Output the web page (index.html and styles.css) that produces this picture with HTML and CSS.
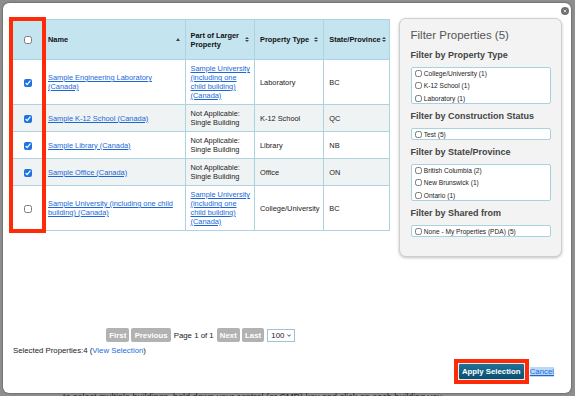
FILE: index.html
```html
<!DOCTYPE html>
<html lang="en">

<head>
    <meta charset="UTF-8">
    <meta name="viewport" content="width=device-width, initial-scale=1.0">
    <title>Select Properties</title>
    <link rel="stylesheet" href="styles.css">
</head>

<body>
    <div class="modal">
        <button class="closeBtn" title="Close">
            <svg width="8" height="8" viewBox="0 0 8 8">
                <circle cx="4" cy="4" r="4" fill="#6f6f6f" />
                <path d="M2.7 2.7 L5.3 5.3 M5.3 2.7 L2.7 5.3" stroke="#e6e6e6" stroke-width="0.9" />
            </svg>
        </button>
        <div class="modalMain">
            <div class="listColumn">
                <div class="tableBox">
                    <table class="propTable">
                        <colgroup>
                            <col style="width: 30px">
                            <col style="width: 142.5px">
                            <col style="width: 69.5px">
                            <col style="width: 69.3px">
                            <col style="width: 65.7px">
                        </colgroup>
                        <thead>
                            <tr>
                                <th class="checkCell"><input type="checkbox"></th>
                                <th>
                                    <div class="thInner"><span>Name</span>
                                        <svg class="sortIcon" width="4" height="3" viewBox="0 0 4 3"><polygon points="0,3 2,0 4,3" /></svg>
                                    </div>
                                </th>
                                <th>
                                    <div class="thInner"><span>Part of Larger Property</span>
                                        <svg class="sortIcon" width="4" height="5" viewBox="0 0 4 5"><polygon points="0,2 2,0 4,2" /><polygon points="0,3 2,5 4,3" /></svg>
                                    </div>
                                </th>
                                <th>
                                    <div class="thInner"><span class="nowrap">Property Type</span>
                                        <svg class="sortIcon" width="4" height="5" viewBox="0 0 4 5"><polygon points="0,2 2,0 4,2" /><polygon points="0,3 2,5 4,3" /></svg>
                                    </div>
                                </th>
                                <th class="lastCol">
                                    <div class="thInner"><span class="nowrap">State/Province</span>
                                        <svg class="sortIcon" width="4" height="5" viewBox="0 0 4 5"><polygon points="0,2 2,0 4,2" /><polygon points="0,3 2,5 4,3" /></svg>
                                    </div>
                                </th>
                            </tr>
                        </thead>
                        <tbody>
                            <tr>
                                <td class="checkCell"><input type="checkbox" checked></td>
                                <td><a href="#">Sample Engineering Laboratory (Canada)</a></td>
                                <td><a href="#">Sample University (including one child building) (Canada)</a></td>
                                <td>Laboratory</td>
                                <td>BC</td>
                            </tr>
                            <tr class="odd">
                                <td class="checkCell"><input type="checkbox" checked></td>
                                <td><a href="#">Sample K-12 School (Canada)</a></td>
                                <td>Not Applicable: Single Building</td>
                                <td>K-12 School</td>
                                <td>QC</td>
                            </tr>
                            <tr>
                                <td class="checkCell"><input type="checkbox" checked></td>
                                <td><a href="#">Sample Library (Canada)</a></td>
                                <td>Not Applicable: Single Building</td>
                                <td>Library</td>
                                <td>NB</td>
                            </tr>
                            <tr class="odd">
                                <td class="checkCell"><input type="checkbox" checked></td>
                                <td><a href="#">Sample Office (Canada)</a></td>
                                <td>Not Applicable: Single Building</td>
                                <td>Office</td>
                                <td>ON</td>
                            </tr>
                            <tr>
                                <td class="checkCell"><input type="checkbox"></td>
                                <td><a href="#">Sample University (including one child building) (Canada)</a></td>
                                <td><a href="#">Sample University (including one child building) (Canada)</a></td>
                                <td>College/University</td>
                                <td>BC</td>
                            </tr>
                        </tbody>
                    </table>
                    <div class="markBox"></div>
                </div>

                <div class="pager">
                    <button class="pageBtn">First</button>
                    <button class="pageBtn">Previous</button>
                    <span class="pageText">Page 1 of 1</span>
                    <button class="pageBtn">Next</button>
                    <button class="pageBtn">Last</button>
                    <div class="pageSize">
                        <span>100</span>
                        <svg width="4" height="3" viewBox="0 0 4 3"><path d="M0.3 0.5 L2 2.3 L3.7 0.5" fill="none" stroke="#222" stroke-width="0.8" /></svg>
                    </div>
                </div>
                <div class="selectedInfo">Selected Properties:4 (<a href="#">View Selection</a>)</div>
            </div>

            <div class="filterPanel">
                <div class="filterTitle">Filter Properties (5)</div>

                <div class="filterHead first">Filter by Property Type</div>
                <div class="filterBox">
                    <label><input type="checkbox">College/University (1)</label>
                    <label><input type="checkbox">K-12 School (1)</label>
                    <label><input type="checkbox">Laboratory (1)</label>
                </div>

                <div class="filterHead">Filter by Construction Status</div>
                <div class="filterBox">
                    <label><input type="checkbox">Test (5)</label>
                </div>

                <div class="filterHead">Filter by State/Province</div>
                <div class="filterBox">
                    <label><input type="checkbox">British Columbia (2)</label>
                    <label><input type="checkbox">New Brunswick (1)</label>
                    <label><input type="checkbox">Ontario (1)</label>
                </div>

                <div class="filterHead">Filter by Shared from</div>
                <div class="filterBox">
                    <label><input type="checkbox">None - My Properties (PDA) (5)</label>
                </div>
            </div>
        </div>

        <div class="modalFooter">
            <div class="applyMark">
                <button class="applyBtn">Apply Selection</button>
            </div>
            <a href="#" class="cancelLink">Cancel</a>
        </div>
    </div>
    <div class="pageBehind">to select multiple buildings, hold down your control (or CMD) key and click on each building you</div>
</body>

</html>
```

FILE: styles.css
```css
html {
    margin: 0px;
    height: 100%;
}

body {
    margin: 0px;
    padding: 0px;
    height: 396px;
    overflow: hidden;
    background-color: #8e8e8e;
    font-family: 'Liberation Sans', Arial, sans-serif;
    color: #222222;
}

a {
    color: #1a68d8;
}

.modal {
    position: relative;
    box-sizing: border-box;
    margin: 3px 0 0 3px;
    width: 568px;
    height: 390px;
    padding: 15px 9px 9px 9px;
    display: flex;
    flex-direction: column;
    background-color: white;
    border-radius: 6px;
    box-shadow: 0 0 2px rgba(0, 0, 0, 0.6);
}

.closeBtn {
    position: absolute;
    top: 3.7px;
    right: 2.3px;
    width: 8px;
    height: 8px;
    padding: 0;
    border: none;
    background: none;
    line-height: 0;
}

.modalMain {
    flex: 1;
    min-height: 0;
    display: flex;
    gap: 10px;
}

.listColumn {
    width: 377px;
    display: flex;
    flex-direction: column;
    padding-top: 1px;
    padding-bottom: 3px;
    box-sizing: border-box;
}

.tableBox {
    position: relative;
}

/* red marker drawn around the checkbox column */
.markBox {
    position: absolute;
    left: -3px;
    top: -2px;
    width: 37px;
    height: 216px;
    box-sizing: border-box;
    border: 4.5px solid #ff2b06;
}

.propTable {
    width: 377px;
    table-layout: fixed;
    border-collapse: collapse;
    font-size: 7.4px;
    line-height: 9px;
}

.propTable th,
.propTable td {
    border: 1px solid #aed3e0;
    vertical-align: middle;
    text-align: left;
}

.propTable th {
    height: 39px;
    padding: 0 5px 0 5px;
    background-color: #c4e4ef;
    font-weight: bold;
    color: #111111;
}

.propTable th.lastCol {
    padding-right: 4px;
}

.propTable td {
    padding: 4px 3px 4px 5px;
}

.propTable tr.odd td {
    background-color: #eff3f4;
}

.propTable .checkCell {
    text-align: center;
    padding: 0;
}

.thInner {
    display: flex;
    align-items: center;
    justify-content: space-between;
    gap: 1px;
}

.nowrap {
    white-space: nowrap;
}

.sortIcon {
    flex-shrink: 0;
    fill: #444444;
}

input[type="checkbox"] {
    width: 8px;
    height: 8px;
    margin: 0;
    vertical-align: middle;
    accent-color: #1d73e6;
}

.pager {
    margin-top: auto;
    display: flex;
    justify-content: center;
    align-items: center;
    gap: 2px;
    height: 14px;
    font-size: 7.8px;
}

.pageBtn {
    height: 14px;
    padding: 0 3.2px;
    border: none;
    border-radius: 2px;
    background-color: #b2b2b2;
    color: white;
    font-family: inherit;
    font-size: 7.8px;
    font-weight: bold;
}

.pageText {
    margin: 0 1px;
}

.pageSize {
    box-sizing: border-box;
    width: 28px;
    height: 13px;
    margin-left: 0.5px;
    padding: 0 3px 0 3.5px;
    display: flex;
    align-items: center;
    justify-content: space-between;
    border: 1px solid #9fc3d6;
    background-color: white;
}

.selectedInfo {
    margin-top: 4px;
    padding-left: 1px;
    font-size: 7.8px;
    line-height: 10px;
}

.selectedInfo a {
    text-decoration: none;
    color: #1a6ee0;
}

.filterPanel {
    align-self: flex-start;
    box-sizing: border-box;
    width: 163px;
    height: 238.5px;
    padding: 9px 10.5px 0 10.5px;
    background-color: #f3f3f3;
    border: 1px solid #cfcfcf;
    border-radius: 7px;
    box-shadow: 0 1px 3px rgba(0, 0, 0, 0.25);
}

.filterTitle {
    font-size: 11.5px;
    line-height: 14px;
    color: #555555;
}

.filterHead {
    margin-top: 7px;
    font-size: 9px;
    line-height: 11px;
    font-weight: bold;
    color: #444444;
}

.filterHead.first {
    margin-top: 8px;
}

.filterBox {
    margin-top: 6px;
    display: flex;
    flex-direction: column;
    gap: 2.5px;
    padding: 0 3.3px;
    background-color: white;
    border: 1px solid #a9d2e0;
    border-radius: 2px;
}

.filterBox label {
    display: flex;
    align-items: center;
    gap: 2px;
    height: 10px;
    font-size: 6.6px;
    color: #222222;
}

.filterBox input[type="checkbox"] {
    width: 7px;
    height: 7px;
}

.modalFooter {
    display: flex;
    justify-content: flex-end;
    align-items: center;
    padding-right: 8px;
}

.applyMark {
    border: 4px solid #ff2b06;
    line-height: 0;
}

.applyBtn {
    width: 67px;
    height: 17px;
    padding: 0;
    border: 1px solid #e4edf2;
    border-radius: 2px;
    background: linear-gradient(#1f7399, #0b4e6e);
    color: white;
    font-family: inherit;
    font-size: 7.8px;
    font-weight: bold;
}

.cancelLink {
    margin-left: 1px;
    font-size: 7.8px;
    line-height: 10px;
    background-color: #bcd8f6;
}

.pageBehind {
    margin-top: 0px;
    padding-left: 63px;
    font-size: 9px;
    line-height: 9px;
    color: #2a2a2a;
}
```
